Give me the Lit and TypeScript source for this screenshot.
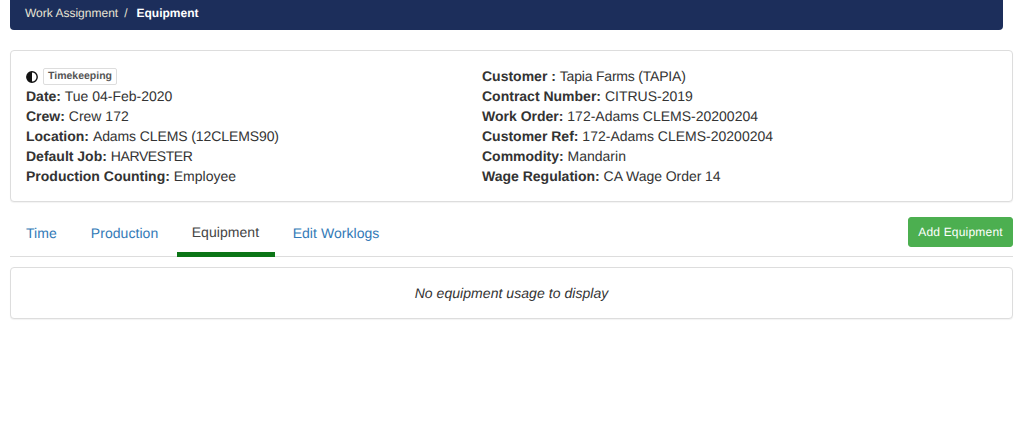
import { LitElement, html, css } from "lit";
import { customElement } from "lit/decorators.js";

@customElement("app-root")
export class AppRoot extends LitElement {
  static styles = css`
    :host { display: block; font-family: "Liberation Sans", Arial, sans-serif; font-size: 14px; line-height: 20px; color: #333; background: #fff; height: 440px; padding: 0 11px 0 10px; box-sizing: border-box; overflow: hidden; text-rendering: geometricPrecision; }
    .crumbs { width: 993px; height: 30px; box-sizing: border-box; background: #1c2e5b; border-radius: 0 0 4px 4px; padding: 3px 15px 0; font-size: 12px; color: #e8e4d4; display: flex; gap: 6px; }
    .crumbs b { color: #fff; margin-left: 3px; }
    .card { border: 1px solid #ddd; border-radius: 4px; box-shadow: 0 1px 1px rgba(0,0,0,.05); background: #fff; }
    .info { margin-top: 20px; height: 152px; box-sizing: border-box; padding: 15px; display: grid; grid-template-columns: 456px 1fr; }
    .tag-row { display: flex; align-items: center; height: 20px; gap: 5px; }
    .tag { font-size: 10.5px; font-weight: bold; color: #555; border: 1px solid #ddd; border-radius: 2px; padding: 0 4px; height: 17px; box-sizing: border-box; display: block; line-height: 15px; margin-top: 1px; }
    .tag-row svg { width: 12px; height: 12px; flex: none; margin-top: 1px; }
    .row { height: 20px; white-space: nowrap; }
    .tabbar { margin-top: 15px; height: 40px; box-sizing: border-box; border-bottom: 1px solid #ddd; display: flex; justify-content: space-between; }
    .tabs { display: flex; padding-left: 1px; gap: 4px; letter-spacing: 0.05px; }
    .tab { padding: 6px 15px 0; height: 40px; box-sizing: border-box; color: #337ab7; }
    .tab.active { color: #444; padding: 5px 15.5px 0 15px; border-bottom: 5px solid #0b7516; margin: 0 -1px 0 -0.5px; }
    .btn { width: 105px; height: 30px; box-sizing: border-box; background: #4caf50; border: 1px solid #4caf50; border-radius: 3px; color: #fff; font-size: 12px; line-height: 18px; text-align: center; padding: 5px 0; letter-spacing: 0.2px; }
    .empty { margin-top: 10px; height: 52px; box-sizing: border-box; display: flex; align-items: center; justify-content: center; font-style: italic; color: #333; letter-spacing: 0.05px; }
  `;

  private row(label: string, value: string, tighten = 0) {
    return html`<div class="row"><b>${label}</b> <span style="letter-spacing:${tighten}px">${value}</span></div>`;
  }

  render() {
    return html`
      <div class="crumbs"><span>Work Assignment</span><span>/</span><b>Equipment</b></div>
      <div class="card info">
        <div>
          <div class="tag-row">
            <svg viewBox="0 0 12 12"><circle cx="6" cy="6" r="5.2" fill="#fff" stroke="#111" stroke-width="1.4"/><path d="M6 .8a5.2 5.2 0 0 0 0 10.4z" fill="#111"/></svg>
            <span class="tag">Timekeeping</span>
          </div>
          ${this.row("Date:", "Tue 04-Feb-2020")}
          ${this.row("Crew:", "Crew 172")}
          ${this.row("Location:", "Adams CLEMS (12CLEMS90)", -0.1)}
          ${this.row("Default Job:", "HARVESTER", -0.4)}
          ${this.row("Production Counting:", "Employee")}
        </div>
        <div>
          ${this.row("Customer :", "Tapia Farms (TAPIA)", -0.2)}
          ${this.row("Contract Number:", "CITRUS-2019")}
          ${this.row("Work Order:", "172-Adams CLEMS-20200204")}
          ${this.row("Customer Ref:", "172-Adams CLEMS-20200204")}
          ${this.row("Commodity:", "Mandarin")}
          ${this.row("Wage Regulation:", "CA Wage Order 14", -0.05)}
        </div>
      </div>
      <div class="tabbar">
        <div class="tabs">
          <div class="tab">Time</div>
          <div class="tab">Production</div>
          <div class="tab active">Equipment</div>
          <div class="tab">Edit Worklogs</div>
        </div>
        <div class="btn">Add Equipment</div>
      </div>
      <div class="card empty">No equipment usage to display</div>
    `;
  }
}
